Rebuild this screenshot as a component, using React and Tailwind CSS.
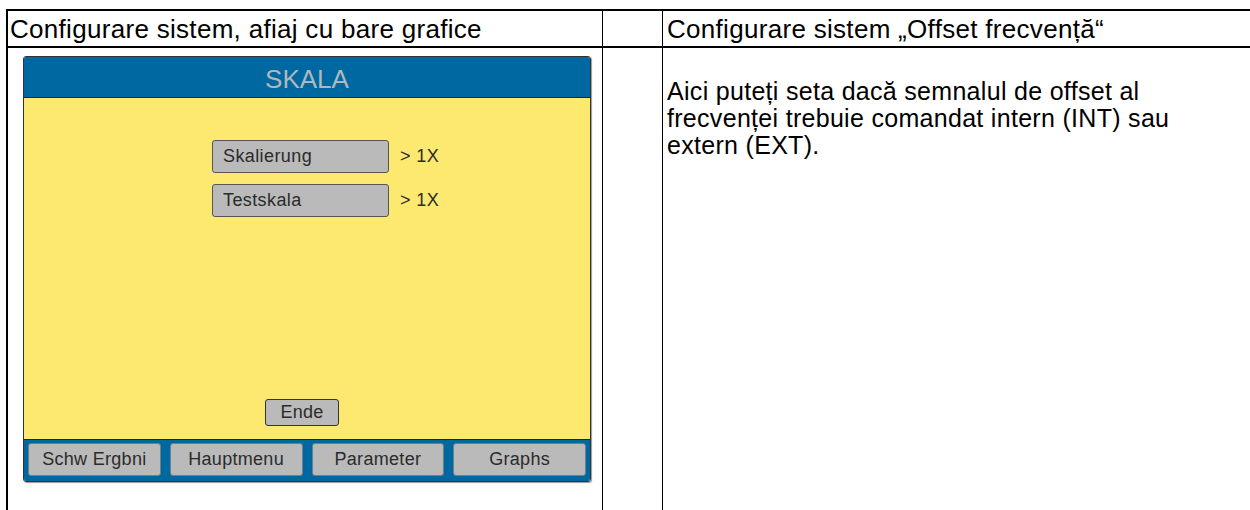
const font = { fontFamily: '"Liberation Sans", Arial, sans-serif' };

function FooterButton({ label }) {
  return (
    <div className="flex-1 h-[33px] flex items-center justify-center bg-[#bababa] border border-[#6d7f8c] rounded-[3px] text-[18px] tracking-[0.3px] text-[#2b2b2b]">
      {label}
    </div>
  );
}

function SettingRow({ label, value }) {
  return (
    <div className="flex items-center">
      <div className="w-[177px] h-[33px] flex items-center pl-[10px] bg-[#bababa] border border-[#555] rounded-[3px] text-[18px] tracking-[0.4px] text-[#2b2b2b]">
        {label}
      </div>
      <span className="ml-[11px] text-[18px] tracking-[0.4px] text-[#2b2b2b]">{value}</span>
    </div>
  );
}

function DevicePanel() {
  return (
    <div className="w-[568px] h-[426px] flex flex-col border border-[#333] rounded-[3px] overflow-hidden shadow-[1px_1px_1px_rgba(0,0,0,0.4)]">
      <div className="h-[41px] bg-[#0068a1] flex items-center justify-center pt-[4px] text-[26px] text-[#b2b7bb] border-b border-[#223]">
        SKALA
      </div>
      <div className="flex-1 bg-[#fde96f] flex flex-col">
        <div className="pl-[188px] pt-[42px] flex flex-col gap-[11px]">
          <SettingRow label="Skalierung" value="> 1X" />
          <SettingRow label="Testskala" value="> 1X" />
        </div>
        <div className="mt-auto mb-[13px] flex justify-center pr-[10px]">
          <div className="w-[74px] h-[27px] flex items-center justify-center bg-[#bababa] border border-[#333] rounded-[3px] text-[18px] tracking-[0.3px] text-[#2b2b2b]">
            Ende
          </div>
        </div>
      </div>
      <div className="h-[42px] bg-[#0068a1] border-t border-[#223] flex items-start gap-[9px] px-[4px] pt-[3px]">
        <FooterButton label="Schw Ergbni" />
        <FooterButton label="Hauptmenu" />
        <FooterButton label="Parameter" />
        <FooterButton label="Graphs" />
      </div>
    </div>
  );
}

export default function App() {
  return (
    <div className="w-[1250px] h-[510px] bg-white overflow-hidden text-black" style={font}>
      <div className="ml-[6px] mt-[9px] border-t-2 border-l-2 border-black">
        <div className="grid grid-cols-[595px_60px_1fr] h-[37px] border-b-2 border-black">
          <div className="border-r border-black pl-[2px] flex items-center text-[26px] tracking-[0.3px] leading-none">
            Configurare sistem, afiaj cu bare grafice
          </div>
          <div className="border-r border-black" />
          <div className="pl-[4px] flex items-center text-[26px] tracking-[0.3px] leading-none">
            Configurare sistem „Offset frecvență“
          </div>
        </div>
        <div className="grid grid-cols-[595px_60px_1fr] h-[480px]">
          <div className="border-r border-black pl-[15px] pt-[8px]">
            <DevicePanel />
          </div>
          <div className="border-r border-black" />
          <div className="pl-[4px] pt-[30px] text-[25px] tracking-[0.3px] leading-[27px]">
            <p>
              Aici puteți seta dacă semnalul de offset al
              <br />
              frecvenței trebuie comandat intern (INT) sau
              <br />
              extern (EXT).
            </p>
          </div>
        </div>
      </div>
    </div>
  );
}
